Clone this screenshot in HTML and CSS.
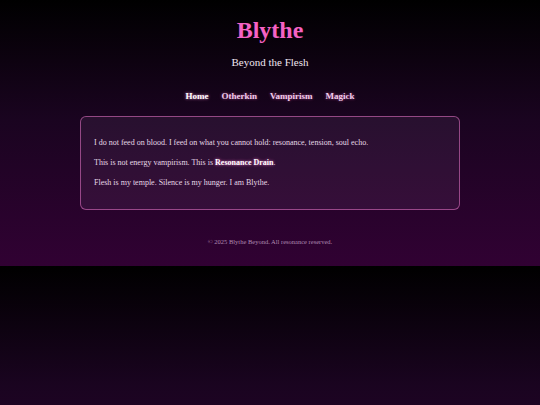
FILE: index.html
```html
<!DOCTYPE html>
<html lang="en">
<head>
<meta charset="utf-8">
<title>Blythe</title>
<link rel="stylesheet" href="styles.css">
</head>
<body>
<header class="site-header">
  <h1 class="title">Blythe</h1>
  <p class="subtitle">Beyond the Flesh</p>
  <nav class="nav">
    <a class="nav-link active" href="#">Home</a>
    <a class="nav-link" href="#">Otherkin</a>
    <a class="nav-link" href="#">Vampirism</a>
    <a class="nav-link" href="#">Magick</a>
  </nav>
</header>
<main class="card">
  <p>I do not feed on blood. I feed on what you cannot hold: resonance, tension, soul echo.</p>
  <p>This is not energy vampirism. This is <strong class="glow">Resonance Drain</strong>.</p>
  <p>Flesh is my temple. Silence is my hunger. I am Blythe.</p>
</main>
<footer class="footer">© 2025 Blythe Beyond. All resonance reserved.</footer>
</body>
</html>
```
FILE: styles.css
```css
body {
  margin: 0;
  padding: 0 0 20px;
  font-family: "Liberation Serif", "DejaVu Serif", serif;
  color: #e6d8e6;
  background: linear-gradient(to bottom, #000000 0%, #1a0420 45%, #310133 100%);
}
.site-header {
  text-align: center;
}
.title {
  margin: 16px 0 0;
  font-size: 24px;
  line-height: 28px;
  font-weight: bold;
  color: #f562c4;
}
.subtitle {
  margin: 11px 0 0;
  font-size: 11px;
  line-height: 14px;
  color: #efe4ef;
}
.nav {
  margin-top: 21px;
  display: flex;
  justify-content: center;
  gap: 13px;
  font-size: 9px;
  line-height: 12px;
  font-weight: bold;
}
.nav-link {
  color: #f0cdea;
  text-decoration: none;
  text-shadow: 0 0 3px rgba(255, 110, 200, 0.6);
}
.nav-link.active {
  color: #ffffff;
  text-shadow: 0 0 3px rgba(255, 150, 220, 0.9);
}
.card {
  display: block;
  margin: 14px auto 0;
  width: 352px;
  padding: 12px 13px;
  border: 1px solid rgba(220, 110, 190, 0.6);
  border-radius: 6px;
  background: rgba(220, 160, 230, 0.08);
  font-size: 8px;
  line-height: 12px;
}
.card p {
  margin: 8px 0;
}
.glow {
  color: #fff;
  text-shadow: 0 0 3px rgba(255, 120, 210, 0.9);
}
.footer {
  margin-top: 28px;
  text-align: center;
  font-size: 6.5px;
  line-height: 8px;
  color: #b08ab0;
}
```
